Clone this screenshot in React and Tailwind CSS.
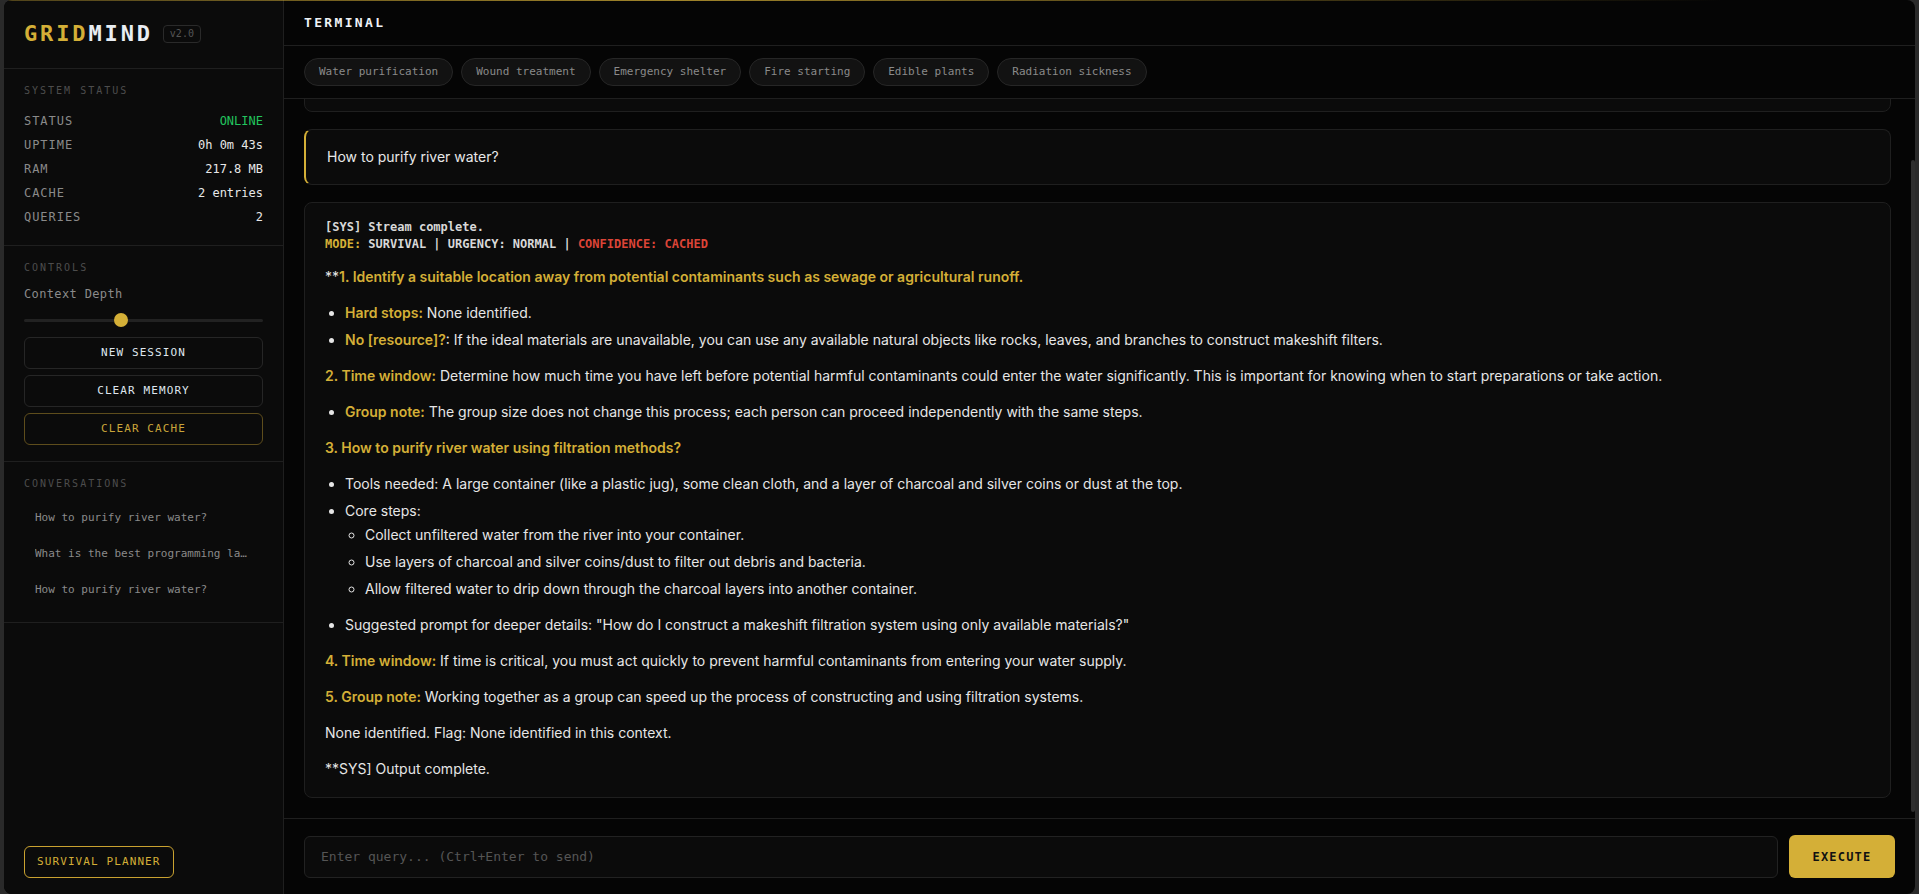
import React from "react";

const MONO = "font-['DejaVu_Sans_Mono','Liberation_Mono',monospace]";
const SANS = "font-['Inter','Noto_Sans',sans-serif]";

function SectionLabel({ children, className = "" }) {
  return (
    <div className={`text-[10px] leading-3 tracking-[0.2em] text-[#4d4d4d] ${className}`}>
      {children}
    </div>
  );
}

function StatRow({ label, value, valueClass }) {
  return (
    <div className="flex h-4 items-center justify-between text-xs leading-4">
      <span className="tracking-[0.08em] text-[#8a8a8a]">{label}</span>
      <span className={valueClass || "text-[#e8e8e8]"}>{value}</span>
    </div>
  );
}

function SideButton({ children, gold }) {
  return (
    <button
      className={
        gold
          ? "h-8 w-full rounded-md border border-[#5e4d1c] text-[11px] tracking-[0.1em] text-[#c9a53a]"
          : "h-8 w-full rounded-md border border-[#262626] text-[11px] tracking-[0.1em] text-[#dfe6ee]"
      }
    >
      {children}
    </button>
  );
}

const chips = [
  "Water purification",
  "Wound treatment",
  "Emergency shelter",
  "Fire starting",
  "Edible plants",
  "Radiation sickness",
];

const convos = [
  "How to purify river water?",
  "What is the best programming language for beginners?",
  "How to purify river water?",
];

function Gold({ children }) {
  return <strong className="font-semibold text-[#d4af37]">{children}</strong>;
}

export default function App() {
  return (
    <div className={`h-screen w-full bg-[#2a2a2a] px-[4px] ${MONO}`}>
      <div className="relative flex h-full overflow-hidden rounded-lg bg-[#050505]">
        <div className="pointer-events-none absolute inset-x-0 top-0 z-10 h-px bg-[linear-gradient(90deg,rgba(212,175,55,0.35),rgba(212,175,55,0.75)_35%,rgba(212,175,55,0)_90%)]" />

        {/* Sidebar */}
        <aside className="flex w-[280px] shrink-0 flex-col border-r border-[#1f1f1f] bg-[#0b0b0b]">
          <div className="flex items-center border-b border-[#1f1f1f] px-5 py-5">
            <span className="text-[22px] font-bold leading-7 tracking-[0.13em]">
              <span className="text-[#d4af37]">GRID</span>
              <span className="text-[#e8edf3]">MIND</span>
            </span>
            <span className="ml-2.5 rounded border border-[#2a2a2a] px-1.5 text-[10px] leading-4 text-[#555]">
              v2.0
            </span>
          </div>

          <div className="border-b border-[#1f1f1f] px-5 pt-4 pb-5">
            <SectionLabel className="mb-4">SYSTEM STATUS</SectionLabel>
            <div className="flex flex-col gap-2">
              <StatRow label="STATUS" value="ONLINE" valueClass="text-[#22c55e]" />
              <StatRow label="UPTIME" value="0h 0m 43s" />
              <StatRow label="RAM" value="217.8 MB" />
              <StatRow label="CACHE" value="2 entries" />
              <StatRow label="QUERIES" value="2" />
            </div>
          </div>

          <div className="border-b border-[#1f1f1f] px-5 pt-4 pb-4">
            <SectionLabel className="mb-3">CONTROLS</SectionLabel>
            <div className="text-xs leading-4 tracking-[0.03em] text-[#8a8a8a]">Context Depth</div>
            <div className="relative mt-[11px] h-[14px]">
              <div className="absolute inset-x-0 top-[6px] h-[3px] rounded-full bg-[#222]" />
              <div className="absolute left-[90px] top-0 h-[14px] w-[14px] rounded-full bg-[#d4af37]" />
            </div>
            <div className="mt-[10px] flex flex-col gap-1.5">
              <SideButton>NEW SESSION</SideButton>
              <SideButton>CLEAR MEMORY</SideButton>
              <SideButton gold>CLEAR CACHE</SideButton>
            </div>
          </div>

          <div className="border-b border-[#1f1f1f] px-5 pt-4 pb-4">
            <SectionLabel className="mb-3">CONVERSATIONS</SectionLabel>
            <div className="flex flex-col gap-1">
              {convos.map((c, i) => (
                <div
                  key={i}
                  className="flex h-8 items-center rounded pl-[11px] pr-[14px] text-[11px] text-[#8a8a8a]"
                >
                  <span className="truncate">{c}</span>
                </div>
              ))}
            </div>
          </div>

          <div className="flex-1" />

          <div className="px-5 pb-4">
            <button className="h-8 rounded-md border border-[#c9a230] px-3 text-[11px] tracking-[0.1em] text-[#d4af37]">
              SURVIVAL PLANNER
            </button>
          </div>
        </aside>

        {/* Main */}
        <main className="flex min-w-0 flex-1 flex-col">
          <div className="flex h-[46px] shrink-0 items-center border-b border-[#1f1f1f] px-5">
            <span className="text-[13px] font-bold tracking-[0.18em] text-[#eef2f6]">TERMINAL</span>
          </div>

          <div className="flex shrink-0 gap-2 border-b border-[#1f1f1f] px-5 py-3">
            {chips.map((c) => (
              <div
                key={c}
                className="flex h-7 items-center rounded-full border border-[#262626] bg-[#121212] px-[14px] text-[11px] text-[#8a8a8a]"
              >
                {c}
              </div>
            ))}
          </div>

          <div className="relative flex min-h-0 flex-1 flex-col justify-end gap-[17px] overflow-hidden pb-5 pl-5 pr-6">
            <div className="h-[80px] shrink-0 rounded-lg border border-[#1f1f1f] bg-[#0b0b0b]" />

            <div
              className={`shrink-0 rounded-lg border border-l-2 border-[#1f1f1f] border-l-[#d4af37] bg-[#0b0b0b] py-[15px] pl-[21px] pr-5 text-sm leading-6 text-[#e8e8e8] ${SANS}`}
            >
              How to purify river water?
            </div>

            <div className="shrink-0 rounded-lg border border-[#1f1f1f] bg-[#0b0b0b] px-5 pt-4 pb-4">
              <div className="mb-3 text-xs font-semibold leading-[17px] text-[#d8d8d8]">
                <div>[SYS] Stream complete.</div>
                <div>
                  <span className="text-[#d4af37]">MODE:</span> SURVIVAL | URGENCY: NORMAL |{" "}
                  <span className="text-[#dc4437]">CONFIDENCE: CACHED</span>
                </div>
              </div>
              <div className={`text-sm leading-6 text-[#e6e6e6] ${SANS}`}>
                <p className="my-3">
                  **<Gold>1. Identify a suitable location away from potential contaminants such as sewage or agricultural runoff.</Gold>
                </p>
                <ul className="my-3 list-disc pl-5">
                  <li className="mb-[3px]">
                    <Gold>Hard stops:</Gold> None identified.
                  </li>
                  <li className="mb-[3px]">
                    <Gold>No [resource]?</Gold>: If the ideal materials are unavailable, you can use any available natural objects like rocks, leaves, and branches to construct makeshift filters.
                  </li>
                </ul>
                <p className="my-3">
                  <Gold>2. Time window:</Gold> Determine how much time you have left before potential harmful contaminants could enter the water significantly. This is important for knowing when to start preparations or take action.
                </p>
                <ul className="my-3 list-disc pl-5">
                  <li className="mb-[3px]">
                    <Gold>Group note:</Gold> The group size does not change this process; each person can proceed independently with the same steps.
                  </li>
                </ul>
                <p className="my-3">
                  <Gold>3. How to purify river water using filtration methods?</Gold>
                </p>
                <ul className="my-3 list-disc pl-5">
                  <li className="mb-[3px]">
                    Tools needed: A large container (like a plastic jug), some clean cloth, and a layer of charcoal and silver coins or dust at the top.
                  </li>
                  <li className="mb-[3px]">
                    Core steps:
                    <ul className="mt-0 mb-3 list-[circle] pl-5">
                      <li className="mb-[3px]">Collect unfiltered water from the river into your container.</li>
                      <li className="mb-[3px]">Use layers of charcoal and silver coins/dust to filter out debris and bacteria.</li>
                      <li className="mb-[3px]">Allow filtered water to drip down through the charcoal layers into another container.</li>
                    </ul>
                  </li>
                  <li className="mb-[3px]">
                    Suggested prompt for deeper details: "How do I construct a makeshift filtration system using only available materials?"
                  </li>
                </ul>
                <p className="my-3">
                  <Gold>4. Time window:</Gold> If time is critical, you must act quickly to prevent harmful contaminants from entering your water supply.
                </p>
                <p className="my-3">
                  <Gold>5. Group note:</Gold> Working together as a group can speed up the process of constructing and using filtration systems.
                </p>
                <p className="my-3">None identified. Flag: None identified in this context.</p>
                <p className="mt-3 mb-0">**SYS] Output complete.</p>
              </div>
            </div>

            <div className="absolute right-0 top-[61px] bottom-[6px] w-[4px] rounded-full bg-[#2e2e2e]" />
          </div>

          <div className="flex shrink-0 items-center gap-[11px] border-t border-[#1f1f1f] px-5 py-4">
            <input
              className="h-[42px] min-w-0 flex-1 rounded-md border border-[#222] bg-[#0b0b0b] px-4 text-[13px] text-[#ddd] outline-none placeholder:text-[#555]"
              placeholder="Enter query... (Ctrl+Enter to send)"
            />
            <button className="h-[43px] w-[106px] shrink-0 rounded-md bg-[#d4af37] text-xs font-bold tracking-[0.1em] text-[#111]">
              EXECUTE
            </button>
          </div>
        </main>
      </div>
    </div>
  );
}
